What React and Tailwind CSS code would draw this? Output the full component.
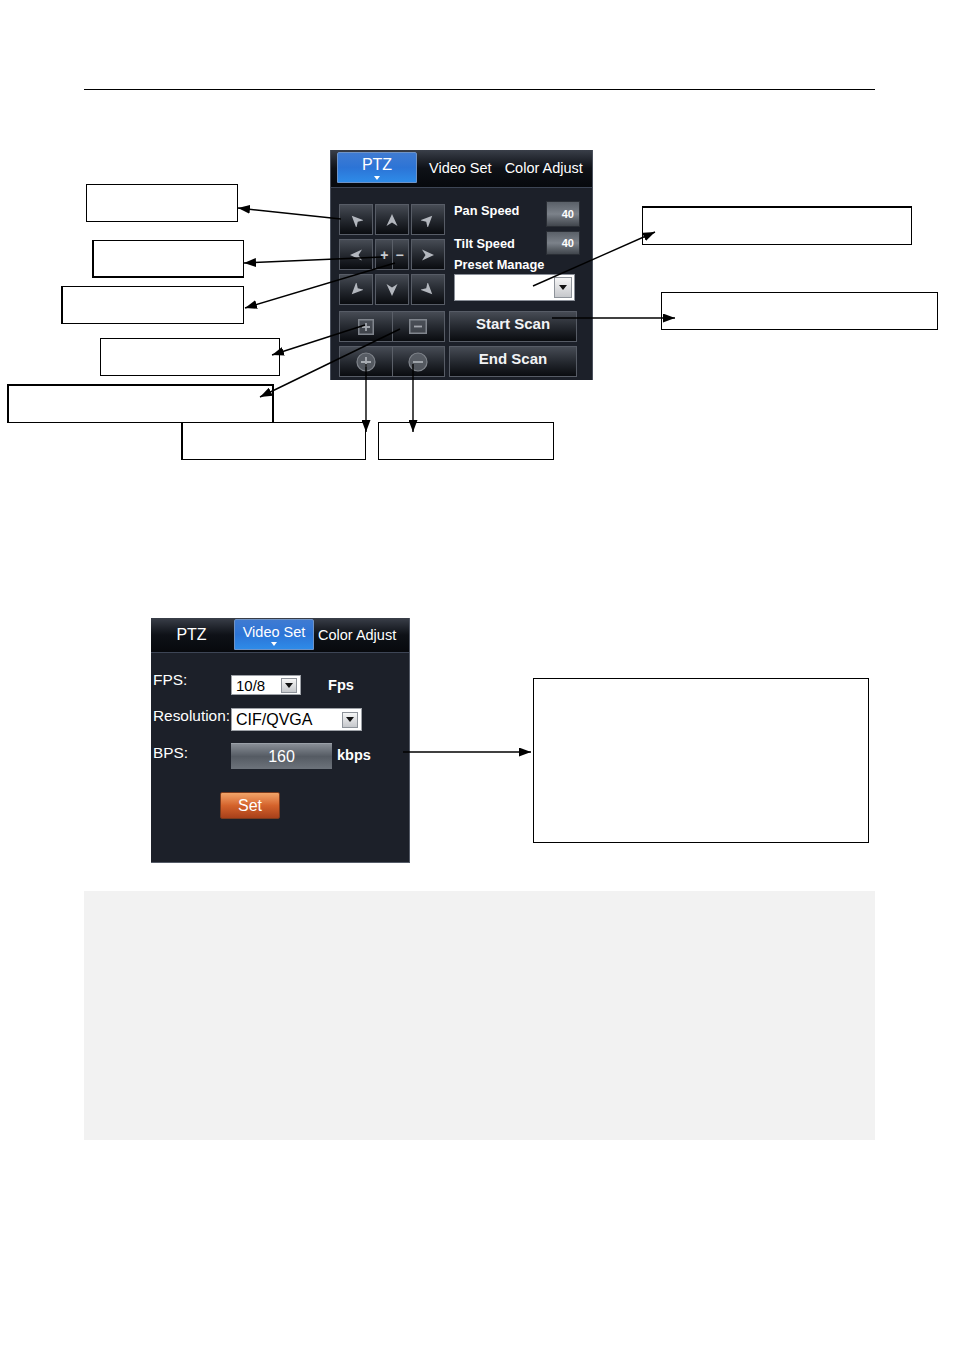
import React from "react";

const BTN =
  "border border-[#575c66] bg-linear-to-b from-[#474c55] via-[#262a31] to-[#0a0c10] flex items-center justify-center";

function Arrow({ rot }) {
  return (
    <svg width="14" height="14" viewBox="-7 -7 14 14">
      <polygon
        points="0,-6 5.5,6 0,2.5 -5.5,6"
        fill="#b3b7be"
        transform={`rotate(${rot})`}
      />
    </svg>
  );
}

function DropBtn({ className }) {
  return (
    <div
      className={`flex items-center justify-center border border-[#8e939a] bg-linear-to-b from-[#f6f6f6] to-[#c6c8cc] ${className}`}
    >
      <svg width="8" height="5" viewBox="0 0 8 5">
        <polygon points="0,0 8,0 4,5" fill="#111" />
      </svg>
    </div>
  );
}

function ActiveTab({ label, className }) {
  return (
    <div
      className={`w-[80px] h-[31px] border border-[#6f93c6] rounded-t-[2px] bg-linear-to-b from-[#3f7bd2] via-[#2c74d6] to-[#2e8be8] flex flex-col items-center justify-center pt-[2px] ${className}`}
    >
      <span className="leading-none text-white">{label}</span>
      <svg className="mt-[3px]" width="6" height="4" viewBox="0 0 6 4">
        <polygon points="0,0 6,0 3,4" fill="#fff" />
      </svg>
    </div>
  );
}

function SpeedBox() {
  return (
    <div className="w-[34px] border border-[#2a2e35] bg-linear-to-b from-[#5a6068] via-[#7c828a] to-[#41464d] flex items-center justify-end pr-[5px] text-[11px] font-bold text-white leading-none">
      40
    </div>
  );
}

function PtzPanel() {
  const rots = [-45, 0, 45, -90, null, 90, -135, 180, 135];
  return (
    <div className="ml-[330px] mt-[60px] w-[263px] h-[230px] bg-[#1c2029] border-x border-[#4b515d] flex flex-col">
      <div className="h-[38px] shrink-0 flex items-start border-b border-[#3d4555] bg-linear-to-b from-[#3a3f49] via-[#0e1117] to-[#07090d]">
        <ActiveTab label="PTZ" className="ml-[6px] mt-[2px] text-[16px]" />
        <span className="ml-[12px] self-center text-[14.5px] leading-none text-white whitespace-nowrap">
          Video Set
        </span>
        <span className="ml-[13px] self-center text-[14.5px] leading-none text-white whitespace-nowrap">
          Color Adjust
        </span>
      </div>
      <div className="flex">
        <div className="ml-[8px] mt-[16px] w-[106px] flex flex-col">
          <div className="grid grid-cols-3 gap-x-[2px] gap-y-[4px]">
            {rots.map((r, i) =>
              r === null ? (
                <div key={i} className={`${BTN} h-[31px] relative`}>
                  <div className="flex-1 flex items-center justify-end pr-[3px] text-[14px] font-bold text-[#c9ccd2] leading-none">
                    +
                  </div>
                  <div className="w-px h-full bg-[#5b6069]" />
                  <div className="flex-1 flex items-center justify-start pl-[3px] text-[14px] font-bold text-[#c9ccd2] leading-none">
                    −
                  </div>
                </div>
              ) : (
                <div key={i} className={`${BTN} h-[31px]`}>
                  <Arrow rot={r} />
                </div>
              )
            )}
          </div>
          <div className={`${BTN} mt-[6px] h-[31px]`}>
            <div className="flex-1 flex items-center justify-center">
              <svg width="16" height="16" viewBox="0 0 16 16">
                <rect x="0.75" y="0.75" width="14.5" height="14.5" fill="#5a5f67" fillOpacity="0.6" stroke="#80858d" strokeWidth="1.5" />
                <path d="M8 4 V12 M4 8 H12" stroke="#a2a6ad" strokeWidth="1.8" />
              </svg>
            </div>
            <div className="w-px h-full bg-[#5b6069]" />
            <div className="flex-1 flex items-center justify-center">
              <svg width="18" height="15" viewBox="0 0 18 15">
                <rect x="0.75" y="0.75" width="16.5" height="13.5" fill="#5a5f67" fillOpacity="0.6" stroke="#80858d" strokeWidth="1.5" />
                <path d="M5 7.5 H13" stroke="#a2a6ad" strokeWidth="1.8" />
              </svg>
            </div>
          </div>
          <div className={`${BTN} mt-[4px] h-[31px]`}>
            <div className="flex-1 flex items-center justify-center">
              <svg width="20" height="20" viewBox="0 0 20 20">
                <circle cx="10" cy="10" r="9" fill="#61666e" fillOpacity="0.8" stroke="#80858c" strokeWidth="1.2" />
                <path d="M10 5 V15 M5 10 H15" stroke="#a8acb2" strokeWidth="1.8" />
              </svg>
            </div>
            <div className="w-px h-full bg-[#5b6069]" />
            <div className="flex-1 flex items-center justify-center">
              <svg width="20" height="20" viewBox="0 0 20 20">
                <circle cx="10" cy="10" r="9" fill="#61666e" fillOpacity="0.8" stroke="#80858c" strokeWidth="1.2" />
                <path d="M5 10 H15" stroke="#a8acb2" strokeWidth="1.8" />
              </svg>
            </div>
          </div>
        </div>
        <div className="ml-[4px] w-[132px] flex flex-col">
          <div className="mt-[13px] h-[26px] flex">
            <span className="ml-[5px] mt-[4px] text-[12.8px] font-bold leading-none text-white whitespace-nowrap">
              Pan Speed
            </span>
            <div className="ml-auto mr-[1px] flex">
              <SpeedBox />
            </div>
          </div>
          <div className="mt-[4px] h-[24px] flex">
            <span className="ml-[5px] mt-[7px] text-[12.8px] font-bold leading-none text-white whitespace-nowrap">
              Tilt Speed
            </span>
            <div className="ml-auto mr-[1px] flex">
              <SpeedBox />
            </div>
          </div>
          <span className="ml-[5px] mt-[4px] text-[12.8px] font-bold leading-none text-white whitespace-nowrap">
            Preset Manage
          </span>
          <div className="ml-[5px] mt-[2px] w-[121px] h-[27px] bg-white border border-[#8a8f98] flex items-center justify-end pr-[2px]">
            <DropBtn className="w-[18px] h-[21px]" />
          </div>
          <div className={`${BTN} mt-[10px] w-[128px] h-[31px] pb-[5px] text-[15px] font-bold text-[#f2f3f5] leading-none`}>
            Start Scan
          </div>
          <div className={`${BTN} mt-[4px] w-[128px] h-[31px] pb-[5px] text-[15px] font-bold text-[#f2f3f5] leading-none`}>
            End Scan
          </div>
        </div>
      </div>
    </div>
  );
}

function VideoPanel() {
  return (
    <div className="ml-[151px] mt-[238px] w-[259px] h-[245px] bg-[#1c2029] border-r border-b border-[#555b67] flex flex-col">
      <div className="h-[35px] shrink-0 flex items-start border-b border-[#3d4555] bg-linear-to-b from-[#3a3f49] via-[#0e1117] to-[#07090d]">
        <div className="w-[81px] h-full flex items-center justify-center text-[16px] leading-none text-white">
          PTZ
        </div>
        <ActiveTab label="Video Set" className="ml-[2px] mt-[1px] text-[14.5px] whitespace-nowrap" />
        <span className="ml-[4px] self-center text-[14.5px] leading-none text-white whitespace-nowrap">
          Color Adjust
        </span>
      </div>
      <div className="pl-[2px] flex flex-col">
        <div className="mt-[19px] h-[36px] flex items-start">
          <span className="w-[78px] text-[15.4px] leading-none text-white">FPS:</span>
          <div className="mt-[3px] w-[70px] h-[20px] bg-white border border-[#9ea2a8] flex items-center pl-[4px] pr-[3px]">
            <span className="flex-1 text-[15px] leading-none text-black">10/8</span>
            <DropBtn className="w-[16px] h-[15px]" />
          </div>
          <span className="ml-[27px] mt-[6px] text-[14.6px] font-bold leading-none text-white">
            Fps
          </span>
        </div>
        <div className="h-[35px] flex items-start">
          <span className="w-[78px] text-[15.4px] leading-none text-white whitespace-nowrap">
            Resolution:
          </span>
          <div className="w-[131px] h-[23px] bg-white border border-[#9ea2a8] flex items-center pl-[4px] pr-[3px]">
            <span className="flex-1 text-[16px] leading-none text-black">CIF/QVGA</span>
            <DropBtn className="w-[16px] h-[16px]" />
          </div>
        </div>
        <div className="h-[49px] flex items-start">
          <span className="w-[78px] mt-[2px] text-[15.4px] leading-none text-white">BPS:</span>
          <div className="w-[101px] h-[26px] border-t border-[#9aa0a8] bg-linear-to-b from-[#888e96] via-[#555b63] to-[#6d737b] flex items-center justify-center text-[16px] leading-none text-white">
            160
          </div>
          <span className="ml-[5px] mt-[5px] text-[14.5px] font-bold leading-none text-white">
            kbps
          </span>
        </div>
        <div className="ml-[67px] w-[60px] h-[27px] rounded-[2px] border border-[#7b3a1c] bg-linear-to-b from-[#f2a468] via-[#d4632c] to-[#a8401a] flex items-center justify-center text-[16px] leading-none text-white">
          Set
        </div>
      </div>
    </div>
  );
}

const boxes = [
  { c: "left-[86px] top-[184px] w-[152px] h-[38px] border" },
  { c: "left-[92px] top-[240px] w-[152px] h-[38px] border border-l-2 border-b-2" },
  { c: "left-[61px] top-[286px] w-[183px] h-[38px] border border-l-2" },
  { c: "left-[100px] top-[338px] w-[180px] h-[38px] border" },
  { c: "left-[7px] top-[384px] w-[267px] h-[39px] border-2 border-b" },
  { c: "left-[181px] top-[422px] w-[185px] h-[38px] border border-l-2" },
  { c: "left-[378px] top-[422px] w-[176px] h-[38px] border" },
  { c: "left-[642px] top-[206px] w-[270px] h-[39px] border border-t-2" },
  { c: "left-[661px] top-[292px] w-[277px] h-[38px] border" },
  { c: "left-[533px] top-[678px] w-[336px] h-[165px] border" },
];

const lines = [
  [341, 219, 238, 208],
  [382, 257, 244, 263],
  [395, 263, 245, 308],
  [365, 325, 272, 355],
  [400, 329, 260, 397],
  [366, 364, 366, 432],
  [413, 364, 413, 432],
  [533, 286, 655, 232],
  [552, 318, 675, 318],
  [403, 752, 531, 752],
];

export default function App() {
  return (
    <div className="relative w-[955px] h-[1350px] bg-white overflow-hidden font-['Liberation_Sans',Arial,Helvetica,sans-serif]">
      <div className="flex flex-col">
        <div className="pt-[89px] pl-[84px]">
          <div className="w-[791px] h-px bg-black" />
        </div>
        <PtzPanel />
        <VideoPanel />
        <div className="ml-[84px] mt-[28px] w-[791px] h-[249px] bg-[#f2f2f2]" />
      </div>

      {boxes.map((b, i) => (
        <div key={i} className={`absolute border-black bg-transparent ${b.c}`} />
      ))}

      <svg
        className="absolute left-0 top-0 z-10 pointer-events-none"
        width="955"
        height="1350"
      >
        <defs>
          <marker
            id="ah"
            markerWidth="12"
            markerHeight="9"
            refX="12"
            refY="4.5"
            orient="auto"
            markerUnits="userSpaceOnUse"
          >
            <polygon points="0,0 12,4.5 0,9" fill="#000" />
          </marker>
        </defs>
        {lines.map(([x1, y1, x2, y2], i) => (
          <line
            key={i}
            x1={x1}
            y1={y1}
            x2={x2}
            y2={y2}
            stroke="#000"
            strokeWidth="1.4"
            markerEnd="url(#ah)"
          />
        ))}
      </svg>
    </div>
  );
}
